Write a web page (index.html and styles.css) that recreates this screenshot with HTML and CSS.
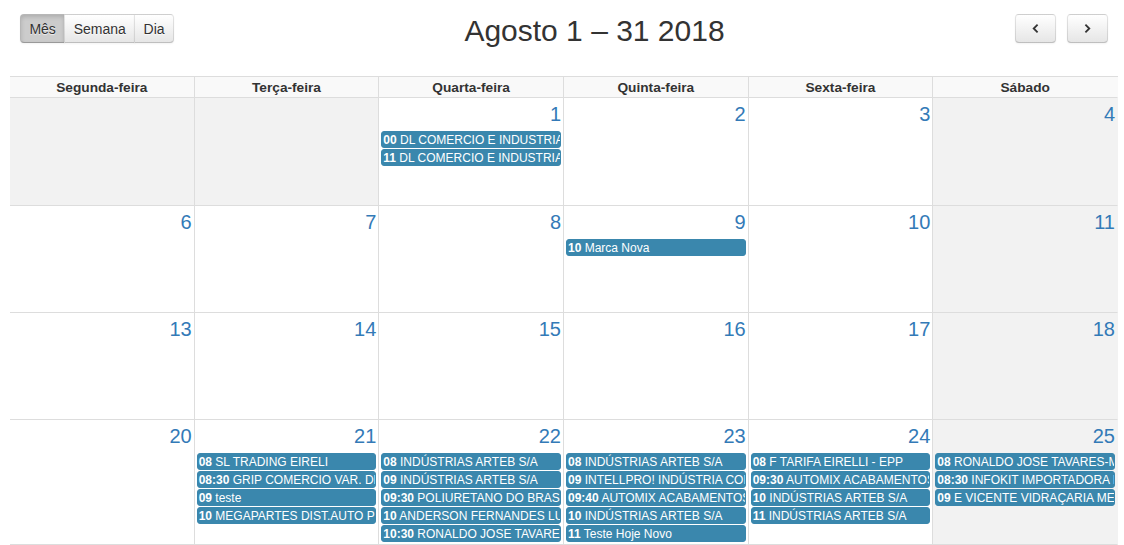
FILE: index.html
```html
<!DOCTYPE html>
<html lang="pt-BR">
<head>
<meta charset="utf-8">
<title>Agenda</title>
<link rel="stylesheet" href="styles.css">
</head>
<body>
<div class="page">
  <div class="toolbar">
    <div class="btn-group">
      <button class="btn active">Mês</button><button class="btn">Semana</button><button class="btn">Dia</button>
    </div>
    <h2 class="title">Agosto 1 – 31 2018</h2>
    <div class="nav">
      <button class="btn icon-btn" aria-label="Anterior"><svg width="7" height="9" viewBox="0 0 7 9"><polyline points="5.6,0.7 1.7,4.5 5.6,8.3" fill="none" stroke="#333" stroke-width="1.8"/></svg></button>
      <button class="btn icon-btn" aria-label="Próximo"><svg width="7" height="9" viewBox="0 0 7 9"><polyline points="1.4,0.7 5.3,4.5 1.4,8.3" fill="none" stroke="#333" stroke-width="1.8"/></svg></button>
    </div>
  </div>

  <div class="month">
    <div class="head">
      <div class="hcell">Segunda-feira</div>
      <div class="hcell">Terça-feira</div>
      <div class="hcell">Quarta-feira</div>
      <div class="hcell">Quinta-feira</div>
      <div class="hcell">Sexta-feira</div>
      <div class="hcell">Sábado</div>
    </div>

    <div class="week first">
      <div class="day off"></div>
      <div class="day off"></div>
      <div class="day"><div class="num">1</div>
        <div class="ev"><b>00</b> DL COMERCIO E INDUSTRIA LTDA</div>
        <div class="ev"><b>11</b> DL COMERCIO E INDUSTRIA LTDA</div>
      </div>
      <div class="day"><div class="num">2</div></div>
      <div class="day"><div class="num">3</div></div>
      <div class="day off"><div class="num">4</div></div>
    </div>

    <div class="week">
      <div class="day"><div class="num">6</div></div>
      <div class="day"><div class="num">7</div></div>
      <div class="day"><div class="num">8</div></div>
      <div class="day"><div class="num">9</div>
        <div class="ev"><b>10</b> Marca Nova</div>
      </div>
      <div class="day"><div class="num">10</div></div>
      <div class="day off"><div class="num">11</div></div>
    </div>

    <div class="week">
      <div class="day"><div class="num">13</div></div>
      <div class="day"><div class="num">14</div></div>
      <div class="day"><div class="num">15</div></div>
      <div class="day"><div class="num">16</div></div>
      <div class="day"><div class="num">17</div></div>
      <div class="day off"><div class="num">18</div></div>
    </div>

    <div class="week">
      <div class="day"><div class="num">20</div></div>
      <div class="day"><div class="num">21</div>
        <div class="ev"><b>08</b> SL TRADING EIRELI</div>
        <div class="ev"><b>08:30</b> GRIP COMERCIO VAR. DE PEÇAS</div>
        <div class="ev"><b>09</b> teste</div>
        <div class="ev"><b>10</b> MEGAPARTES DIST.AUTO PEÇAS</div>
      </div>
      <div class="day"><div class="num">22</div>
        <div class="ev"><b>08</b> INDÚSTRIAS ARTEB S/A</div>
        <div class="ev"><b>09</b> INDÚSTRIAS ARTEB S/A</div>
        <div class="ev"><b>09:30</b> POLIURETANO DO BRASIL</div>
        <div class="ev"><b>10</b> ANDERSON FERNANDES LUZ</div>
        <div class="ev"><b>10:30</b> RONALDO JOSE TAVARES</div>
      </div>
      <div class="day"><div class="num">23</div>
        <div class="ev"><b>08</b> INDÚSTRIAS ARTEB S/A</div>
        <div class="ev"><b>09</b> INTELLPRO! INDÚSTRIA COMÉRCIO</div>
        <div class="ev"><b>09:40</b> AUTOMIX ACABAMENTOS</div>
        <div class="ev"><b>10</b> INDÚSTRIAS ARTEB S/A</div>
        <div class="ev"><b>11</b> Teste Hoje Novo</div>
      </div>
      <div class="day"><div class="num">24</div>
        <div class="ev"><b>08</b> F TARIFA EIRELLI - EPP</div>
        <div class="ev"><b>09:30</b> AUTOMIX ACABAMENTOS</div>
        <div class="ev"><b>10</b> INDÚSTRIAS ARTEB S/A</div>
        <div class="ev"><b>11</b> INDÚSTRIAS ARTEB S/A</div>
      </div>
      <div class="day off"><div class="num">25</div>
        <div class="ev"><b>08</b> RONALDO JOSE TAVARES-ME</div>
        <div class="ev"><b>08:30</b> INFOKIT IMPORTADORA E EXPORTADORA</div>
        <div class="ev"><b>09</b> E VICENTE VIDRAÇARIA ME</div>
      </div>
    </div>

    <div class="week">
      <div class="day"><div class="num">27</div></div>
      <div class="day"><div class="num">28</div></div>
      <div class="day"><div class="num">29</div></div>
      <div class="day"><div class="num">30</div></div>
      <div class="day"><div class="num">31</div></div>
      <div class="day off"></div>
    </div>
  </div>
</div>
</body>
</html>
```

FILE: styles.css
```css
html, body {
  margin: 0;
  padding: 0;
  overflow: hidden;
  background: #fff;
}

body {
  font-family: "Liberation Sans", Arial, Helvetica, sans-serif;
  font-size: 14px;
  color: #333;
}

.page {
  padding: 14px 0 0 10px;
  width: 1108px;
}

.toolbar {
  box-sizing: border-box;
  padding: 0 10px;
  display: flex;
  align-items: flex-start;
  margin-bottom: 28px;
}

.btn-group {
  display: flex;
}

.btn {
  height: 29.4px;
  padding: 0 8.4px;
  margin: 0;
  font-family: inherit;
  font-size: 14px;
  color: #333;
  border: 1px solid;
  border-color: rgba(0,0,0,0.1) rgba(0,0,0,0.1) rgba(0,0,0,0.25);
  background-color: #f5f5f5;
  background-image: linear-gradient(to bottom, #ffffff, #e6e6e6);
  box-shadow: inset 0 1px 0 rgba(255,255,255,0.2), 0 1px 2px rgba(0,0,0,0.05);
  text-shadow: 0 1px 1px rgba(255,255,255,0.75);
  cursor: pointer;
  box-sizing: border-box;
}

.btn-group .btn {
  border-radius: 0;
  margin-left: -1px;
}

.btn-group .btn:first-child {
  margin-left: 0;
  border-radius: 4px 0 0 4px;
}

.btn-group .btn:last-child {
  border-radius: 0 4px 4px 0;
}

.btn.active {
  background-color: #cccccc;
  background-image: none;
  box-shadow: inset 0 2px 4px rgba(0,0,0,0.15), 0 1px 2px rgba(0,0,0,0.05);
}

.title {
  flex: 1;
  margin: 0;
  text-align: center;
  font-size: 30px;
  font-weight: normal;
  line-height: 34px;
  color: #333;
}

.nav {
  display: flex;
  gap: 11px;
}

.icon-btn {
  width: 41px;
  border-radius: 4px;
  display: flex;
  align-items: center;
  justify-content: center;
  padding: 0;
}

.month {
  width: 1108px;
  border-top: 1px solid #ddd;
}

.head,
.week {
  display: grid;
  grid-template-columns: repeat(6, 1fr);
}

.hcell {
  background: #f9f9f9;
  border-right: 1px solid #ddd;
  border-bottom: 1px solid #ddd;
  text-align: center;
  font-weight: bold;
  font-size: 13.7px;
  padding-top: 1px;
  line-height: 19px;
  color: #333;
}

.week {
  min-height: 107px;
}

.week.first {
  min-height: 108px;
}

.day {
  border-right: 1px solid #ddd;
  border-bottom: 1px solid #ddd;
  background: #fff;
  min-width: 0;
  padding-bottom: 2px;
}

.hcell:last-child,
.day:last-child {
  border-right-color: transparent;
}

.day.off {
  background: #f2f2f2;
}

.num {
  text-align: right;
  padding: 2px;
  font-size: 20px;
  line-height: 28px;
  color: #337ab7;
}

.ev {
  margin: 1px 2px 0;
  padding: 1px 1px 0;
  border: 1px solid #3a87ad;
  background: #3a87ad;
  color: #fff;
  border-radius: 3px;
  font-size: 12px;
  line-height: 14px;
  white-space: nowrap;
  overflow: hidden;
}

.ev b {
  font-weight: bold;
}
```
